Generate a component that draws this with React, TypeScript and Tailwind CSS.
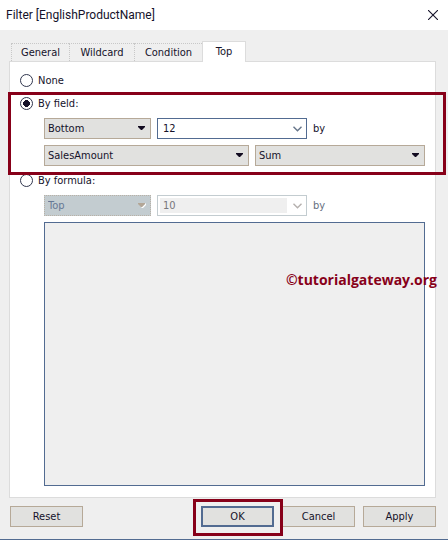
import { useState } from "react";
import type { ReactNode } from "react";

const tabs = ["General", "Wildcard", "Condition", "Top"];

function Chevron({ dim }: { dim?: boolean }) {
  return (
    <svg width="9" height="6" viewBox="0 0 9 6" fill="none" stroke={dim ? "#b5b0ae" : "#66758a"} strokeWidth="1.4" aria-hidden="true">
      <path d="M0.5 0.7 4.5 4.7 8.5 0.7" />
    </svg>
  );
}

function DropDown({ label, options, className, disabled }: { label: string; options: string[]; className: string; disabled?: boolean }) {
  return (
    <div className={`relative h-[21px] ${className}`}>
      <select
        aria-label={label}
        disabled={disabled}
        className={`block h-full w-full appearance-none border pr-5 pl-[3px] text-[11px] leading-[19px] opacity-100 outline-none ${
          disabled ? "border-dotted border-[#b9b1a6] bg-[#c3ccd0] text-[#667894]" : "border-[#b6a998] bg-[#e1e1df] text-[#15122a]"
        }`}
      >
        {options.map((option) => (
          <option key={option}>{option}</option>
        ))}
      </select>
      <svg className="pointer-events-none absolute top-2 right-[5px]" width="8" height="5" viewBox="0 0 8 5" aria-hidden="true">
        {disabled && <path d="M3 5H5L8 2V0L4 4Z" fill="#fff" />}
        <path d="M0 0H7V1L4 4H3L0 1Z" fill={disabled ? "#b3a696" : "#120b20"} />
      </svg>
    </div>
  );
}

function Radio({ label, checked, onSelect }: { label: string; checked: boolean; onSelect: () => void }) {
  return (
    <label className="flex h-[17px] w-fit items-center gap-[5px]">
      <input
        type="radio"
        name="top-filter"
        checked={checked}
        onChange={onSelect}
        className="size-[13px] appearance-none rounded-full border border-[#30364e] bg-white bg-radial from-[#15122a] from-0% to-transparent to-0% checked:from-50% checked:to-50% checked:bg-size-[9px_9px] checked:bg-center checked:bg-no-repeat"
      />
      {label}
    </label>
  );
}

function Highlight({ className }: { className: string }) {
  return <div aria-hidden="true" className={`pointer-events-none absolute border-3 border-[#870019] ${className}`} />;
}

function DialogButton({ children, primary }: { children: ReactNode; primary?: boolean }) {
  return (
    <button
      type="button"
      className={`h-[21px] w-[73px] bg-[#e1e1df] text-center leading-[17px] ${primary ? "border-2 border-[#526b91]" : "border border-[#b6a998]"}`}
    >
      {children}
    </button>
  );
}

export default function App() {
  const [mode, setMode] = useState("field");

  return (
    <main className="border-b border-[#526b91] bg-[#efefef] font-['DejaVu_Sans_Condensed','DejaVu_Sans',sans-serif] text-[11px] leading-4 text-[#15122a]">
      <header className="flex h-[30px] items-center justify-between bg-white pr-2.5 pl-1.5 font-['Roboto',sans-serif] text-xs">
        <h1>Filter [EnglishProductName]</h1>
        <button type="button" aria-label="Close">
          <svg width="10" height="10" viewBox="0 0 10 10" fill="none" stroke="#15122a" strokeWidth="1.1" aria-hidden="true">
            <path d="M0 0 10 10M10 0 0 10" />
          </svg>
        </button>
      </header>

      <div className="pt-[11px] pr-3 pl-[9px]">
        <div role="tablist" className="flex items-end pl-0.5">
          {tabs.map((tab) => (
            <button
              key={tab}
              type="button"
              role="tab"
              aria-selected={tab === "Top"}
              className={
                tab === "Top"
                  ? "relative z-10 -mb-px h-[21px] w-11 border border-b-0 border-[#dcdcdc] bg-white"
                  : `h-[18px] border-t border-l border-dotted border-[#c8c8c8] ${
                      tab === "General" ? "w-[58px]" : tab === "Wildcard" ? "w-[65px]" : "w-[68px]"
                    }`
              }
            >
              {tab}
            </button>
          ))}
        </div>

        <section role="tabpanel" aria-label="Top" className="border border-[#dcdcdc] bg-white pt-2.5 pr-2.5 pb-[11px] pl-2.5">
          <Radio label="None" checked={mode === "none"} onSelect={() => setMode("none")} />

          <div className="relative mt-1.5">
            <Radio label="By field:" checked={mode === "field"} onSelect={() => setMode("field")} />
            <div className="mt-[6px] flex items-center gap-1.5 pl-6">
              <DropDown label="Direction" options={["Bottom", "Top"]} className="w-[107px]" />
              <div className="flex h-[21px] w-[150px] items-center border border-[#526b91] bg-white pr-1">
                <input aria-label="Count" defaultValue="12" className="w-full min-w-0 flex-1 pl-[5px] outline-none" />
                <button type="button" aria-label="Show counts">
                  <Chevron />
                </button>
              </div>
              <span>by</span>
            </div>
            <div className="mt-1.5 flex gap-1.5 pl-6">
              <DropDown label="Field" options={["SalesAmount"]} className="w-[205px]" />
              <DropDown label="Aggregation" options={["Sum"]} className="flex-1" />
            </div>
            <Highlight className="-top-[3px] -right-[21px] -bottom-[9px] -left-3" />
          </div>

          <div className="mt-1.5">
            <Radio label="By formula:" checked={mode === "formula"} onSelect={() => setMode("formula")} />
            <div className="mt-[6px] flex items-center gap-1.5 pl-6 text-[#667080]">
              <DropDown label="Formula direction" options={["Top"]} className="w-[107px]" disabled />
              <div className="flex h-[21px] w-[150px] items-center gap-1.5 border border-[#c3ccd0] bg-white py-0.5 pr-1 pl-0.5">
                <input aria-label="Formula count" defaultValue="10" disabled className="h-[15px] w-full min-w-0 flex-1 bg-[#efefef] pl-[3px] text-[#77767c]" />
                <Chevron dim />
              </div>
              <span>by</span>
            </div>
            <div className="relative mt-1.5 ml-6">
              <textarea aria-label="Formula" disabled className="block h-[264px] w-full resize-none border border-[#526b91] bg-[#efefef]" />
              <span className="absolute top-12 -right-3 font-['Open_Sans',sans-serif] text-sm leading-5 font-bold text-[#870019]">
                ©tutorialgateway.org
              </span>
            </div>
          </div>
        </section>
      </div>

      <footer className="flex items-center justify-between pt-2 pr-3 pb-3 pl-2.5">
        <DialogButton>Reset</DialogButton>
        <div className="flex gap-2">
          <div className="relative flex">
            <DialogButton primary>OK</DialogButton>
            <Highlight className="-top-[7px] -right-[9px] -bottom-[9px] -left-2" />
          </div>
          <DialogButton>Cancel</DialogButton>
          <DialogButton>Apply</DialogButton>
        </div>
      </footer>
    </main>
  );
}
